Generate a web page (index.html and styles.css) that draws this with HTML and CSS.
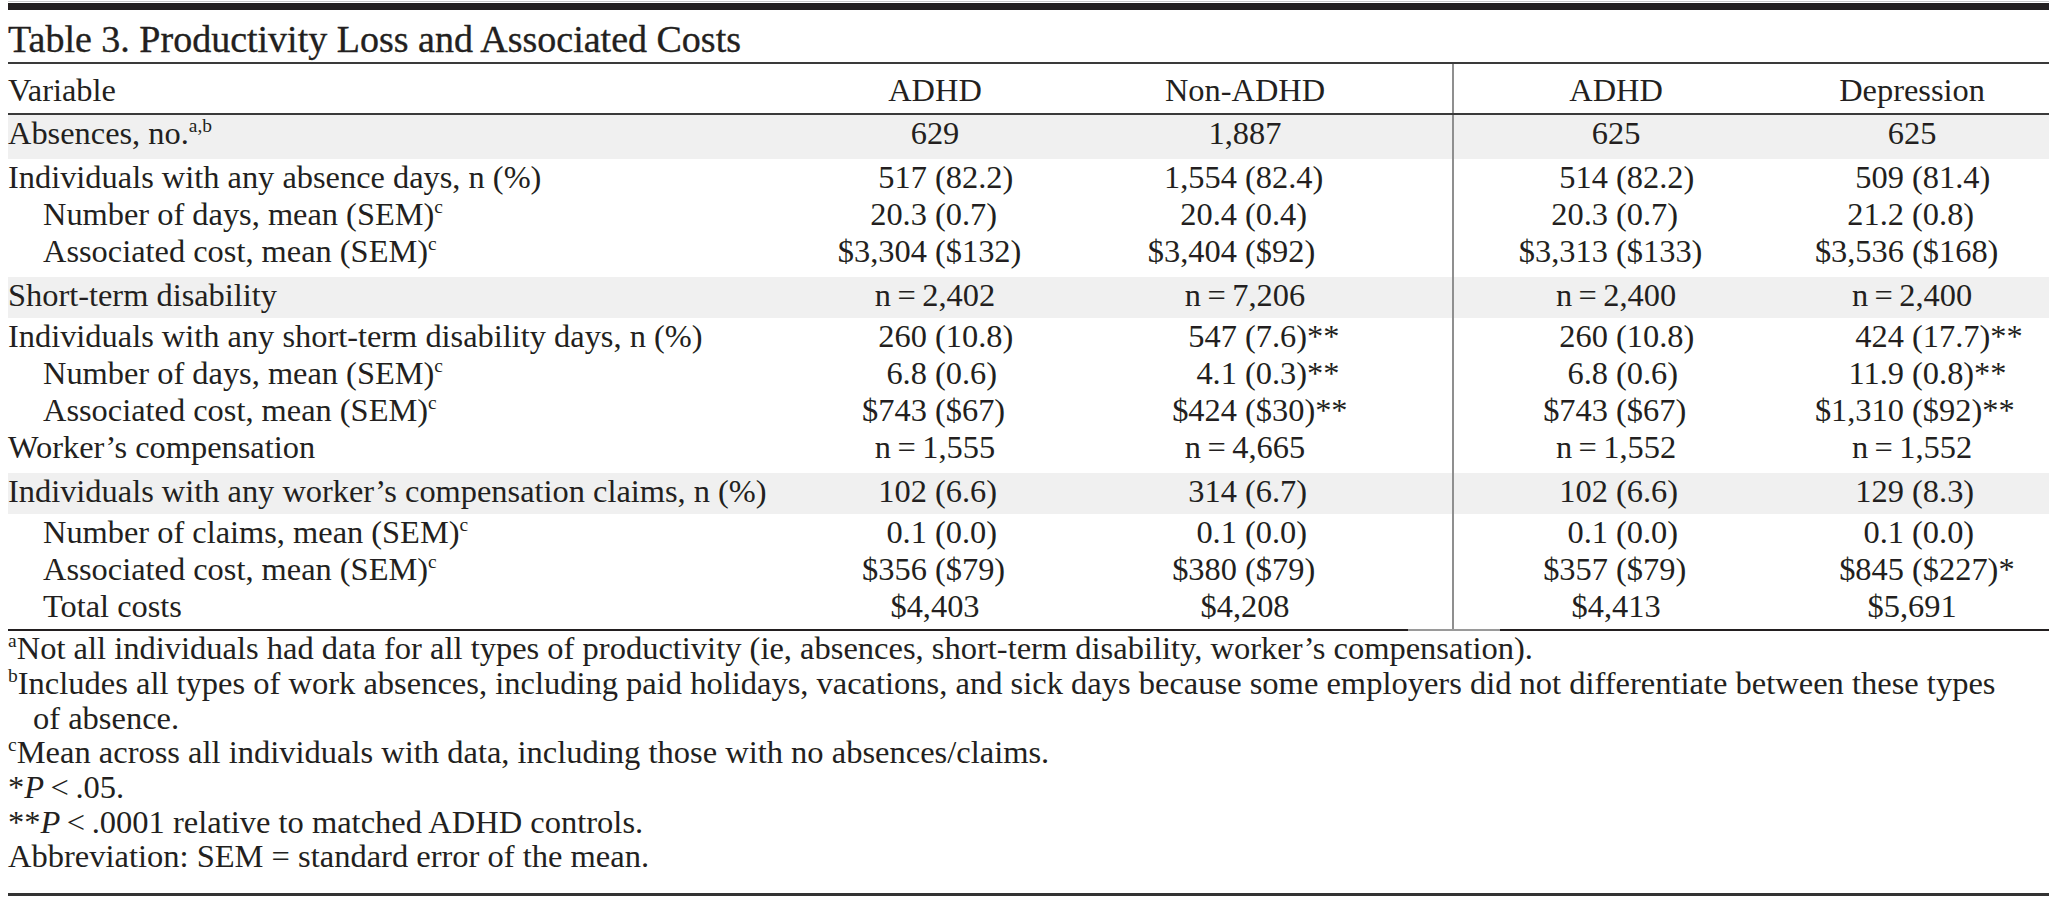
FILE: index.html
```html
<!DOCTYPE html>
<html lang="en">
<head>
<meta charset="utf-8">
<title>Table 3. Productivity Loss and Associated Costs</title>
<link rel="stylesheet" href="styles.css">
</head>
<body>
<div class="page">
  <div class="rule-light"></div>
  <div class="rule-heavy"></div>
  <h1 class="title">Table 3. Productivity Loss and Associated Costs</h1>
  <table class="data">
    <colgroup>
      <col class="c-label">
      <col class="c1"><col class="c1">
      <col class="c2"><col class="c2">
      <col class="c-sp">
      <col class="c3"><col class="c3">
      <col class="c4"><col class="c4">
      <col class="c-end">
    </colgroup>
    <thead>
      <tr>
        <th class="lbl">Variable</th>
        <th colspan="2">ADHD</th>
        <th colspan="2">Non-ADHD</th>
        <th></th>
        <th colspan="2" class="div">ADHD</th>
        <th colspan="2">Depression</th>
        <th></th>
      </tr>
    </thead>
    <tbody>
      <tr class="sec first">
        <td class="lbl">Absences, no.<sup>a,b</sup></td>
        <td colspan="2" class="ctr">629</td>
        <td colspan="2" class="ctr">1,887</td>
        <td></td>
        <td colspan="2" class="ctr div">625</td>
        <td colspan="2" class="ctr">625</td>
        <td></td>
      </tr>
      <tr>
        <td class="lbl">Individuals with any absence days, n (%)</td>
        <td class="l">517&nbsp;</td><td class="r">(82.2)</td>
        <td class="l">1,554&nbsp;</td><td class="r">(82.4)</td>
        <td></td>
        <td class="l div">514&nbsp;</td><td class="r">(82.2)</td>
        <td class="l">509&nbsp;</td><td class="r">(81.4)</td>
        <td></td>
      </tr>
      <tr>
        <td class="lbl ind">Number of days, mean (SEM)<sup>c</sup></td>
        <td class="l">20.3&nbsp;</td><td class="r">(0.7)</td>
        <td class="l">20.4&nbsp;</td><td class="r">(0.4)</td>
        <td></td>
        <td class="l div">20.3&nbsp;</td><td class="r">(0.7)</td>
        <td class="l">21.2&nbsp;</td><td class="r">(0.8)</td>
        <td></td>
      </tr>
      <tr>
        <td class="lbl ind">Associated cost, mean (SEM)<sup>c</sup></td>
        <td class="l">$3,304&nbsp;</td><td class="r">($132)</td>
        <td class="l">$3,404&nbsp;</td><td class="r">($92)</td>
        <td></td>
        <td class="l div">$3,313&nbsp;</td><td class="r">($133)</td>
        <td class="l">$3,536&nbsp;</td><td class="r">($168)</td>
        <td></td>
      </tr>
      <tr class="sec gap">
        <td class="lbl">Short-term disability</td>
        <td colspan="2" class="ctr">n&#8201;=&#8201;2,402</td>
        <td colspan="2" class="ctr">n&#8201;=&#8201;7,206</td>
        <td></td>
        <td colspan="2" class="ctr div">n&#8201;=&#8201;2,400</td>
        <td colspan="2" class="ctr">n&#8201;=&#8201;2,400</td>
        <td></td>
      </tr>
      <tr>
        <td class="lbl">Individuals with any short-term disability days, n (%)</td>
        <td class="l">260&nbsp;</td><td class="r">(10.8)</td>
        <td class="l">547&nbsp;</td><td class="r">(7.6)**</td>
        <td></td>
        <td class="l div">260&nbsp;</td><td class="r">(10.8)</td>
        <td class="l">424&nbsp;</td><td class="r">(17.7)**</td>
        <td></td>
      </tr>
      <tr>
        <td class="lbl ind">Number of days, mean (SEM)<sup>c</sup></td>
        <td class="l">6.8&nbsp;</td><td class="r">(0.6)</td>
        <td class="l">4.1&nbsp;</td><td class="r">(0.3)**</td>
        <td></td>
        <td class="l div">6.8&nbsp;</td><td class="r">(0.6)</td>
        <td class="l">11.9&nbsp;</td><td class="r">(0.8)**</td>
        <td></td>
      </tr>
      <tr>
        <td class="lbl ind">Associated cost, mean (SEM)<sup>c</sup></td>
        <td class="l">$743&nbsp;</td><td class="r">($67)</td>
        <td class="l">$424&nbsp;</td><td class="r">($30)**</td>
        <td></td>
        <td class="l div">$743&nbsp;</td><td class="r">($67)</td>
        <td class="l">$1,310&nbsp;</td><td class="r">($92)**</td>
        <td></td>
      </tr>
      <tr>
        <td class="lbl">Worker’s compensation</td>
        <td colspan="2" class="ctr">n&#8201;=&#8201;1,555</td>
        <td colspan="2" class="ctr">n&#8201;=&#8201;4,665</td>
        <td></td>
        <td colspan="2" class="ctr div">n&#8201;=&#8201;1,552</td>
        <td colspan="2" class="ctr">n&#8201;=&#8201;1,552</td>
        <td></td>
      </tr>
      <tr class="sec gap">
        <td class="lbl">Individuals with any worker’s compensation claims, n (%)</td>
        <td class="l">102&nbsp;</td><td class="r">(6.6)</td>
        <td class="l">314&nbsp;</td><td class="r">(6.7)</td>
        <td></td>
        <td class="l div">102&nbsp;</td><td class="r">(6.6)</td>
        <td class="l">129&nbsp;</td><td class="r">(8.3)</td>
        <td></td>
      </tr>
      <tr>
        <td class="lbl ind">Number of claims, mean (SEM)<sup>c</sup></td>
        <td class="l">0.1&nbsp;</td><td class="r">(0.0)</td>
        <td class="l">0.1&nbsp;</td><td class="r">(0.0)</td>
        <td></td>
        <td class="l div">0.1&nbsp;</td><td class="r">(0.0)</td>
        <td class="l">0.1&nbsp;</td><td class="r">(0.0)</td>
        <td></td>
      </tr>
      <tr>
        <td class="lbl ind">Associated cost, mean (SEM)<sup>c</sup></td>
        <td class="l">$356&nbsp;</td><td class="r">($79)</td>
        <td class="l">$380&nbsp;</td><td class="r">($79)</td>
        <td></td>
        <td class="l div">$357&nbsp;</td><td class="r">($79)</td>
        <td class="l">$845&nbsp;</td><td class="r">($227)*</td>
        <td></td>
      </tr>
      <tr class="last">
        <td class="lbl ind">Total costs</td>
        <td colspan="2" class="ctr">$4,403</td>
        <td colspan="2" class="ctr">$4,208</td>
        <td></td>
        <td colspan="2" class="ctr div">$4,413</td>
        <td colspan="2" class="ctr">$5,691</td>
        <td></td>
      </tr>
    </tbody>
  </table>
  <div class="rule-bottom"></div>
  <div class="notes">
    <p><sup>a</sup>Not all individuals had data for all types of productivity (ie, absences, short-term disability, worker’s compensation).</p>
    <p><sup>b</sup>Includes all types of work absences, including paid holidays, vacations, and sick days because some employers did not differentiate between these types<br>of absence.</p>
    <p><sup>c</sup>Mean across all individuals with data, including those with no absences/claims.</p>
    <p>*<i>P</i>&#8201;&lt;&#8201;.05.</p>
    <p>**<i>P</i>&#8201;&lt;&#8201;.0001 relative to matched ADHD controls.</p>
    <p>Abbreviation: SEM = standard error of the mean.</p>
  </div>
</div>
</body>
</html>
```

FILE: styles.css
```css
html, body {
  margin: 0;
  padding: 0;
  background: #ffffff;
}

body {
  font-family: "Liberation Serif", "Times New Roman", serif;
  color: #231f20;
}

.page {
  margin: 0 8px;
  width: 2041px;
}

.rule-light {
  margin-top: 1px;
  height: 1px;
  background: #c9c9c9;
}

.rule-heavy {
  margin-top: 1px;
  height: 7px;
  background: #231f20;
}

.title {
  margin: 0;
  font-size: 38px;
  font-weight: normal;
  line-height: 42px;
  padding: 8.1px 0 1.6px;
  border-bottom: 2px solid #3a3a3a;
  -webkit-text-stroke: 0.35px #231f20;
}

.data {
  width: 2041px;
  table-layout: fixed;
  border-collapse: separate;
  border-spacing: 0;
  font-size: 32.4px;
  line-height: 37px;
}

.c-label { width: 782px; }
.c1 { width: 145px; }
.c2 { width: 165px; }
.c-sp { width: 42px; }
.c3 { width: 164px; }
.c4 { width: 132px; }
.c-end { width: 5px; }

.data th,
.data td {
  padding: 0;
  white-space: nowrap;
  font-weight: normal;
  vertical-align: top;
}

.data thead th {
  padding: 8px 0 4px;
  border-bottom: 2px solid #3a3a3a;
  text-align: center;
}

.data thead th.lbl,
.data td.lbl {
  text-align: left;
}

.data td.ind {
  padding-left: 35px;
}

.data td.l {
  text-align: right;
}

.data td.r {
  text-align: left;
}

.data td.ctr {
  text-align: center;
}

.data .div {
  box-shadow: inset 2px 0 0 #8f8f8f;
}

.data tr.sec > td {
  background: #f0f0f0;
  padding-bottom: 4px;
}

.data tr.sec.first > td {
  padding-bottom: 7px;
}

.data tr.sec.gap > td {
  padding-top: 7px;
  background: linear-gradient(to bottom, #ffffff 7px, #f0f0f0 7px);
}

.data tr.last > td {
  padding-bottom: 4px;
}

sup {
  font-size: 0.6em;
  line-height: 0;
  vertical-align: 0.6em;
}

.rule-bottom {
  height: 2.5px;
  background: linear-gradient(to right, #231f20 1400px, #9a9a9a 1400px, #9a9a9a 1492px, #231f20 1492px);
}

.notes {
  font-size: 32.5px;
  line-height: 34.7px;
  padding: 0 0 19px;
  border-bottom: 3px solid #333333;
}

.notes p {
  margin: 0;
  padding-left: 25px;
  text-indent: -25px;
}
```
